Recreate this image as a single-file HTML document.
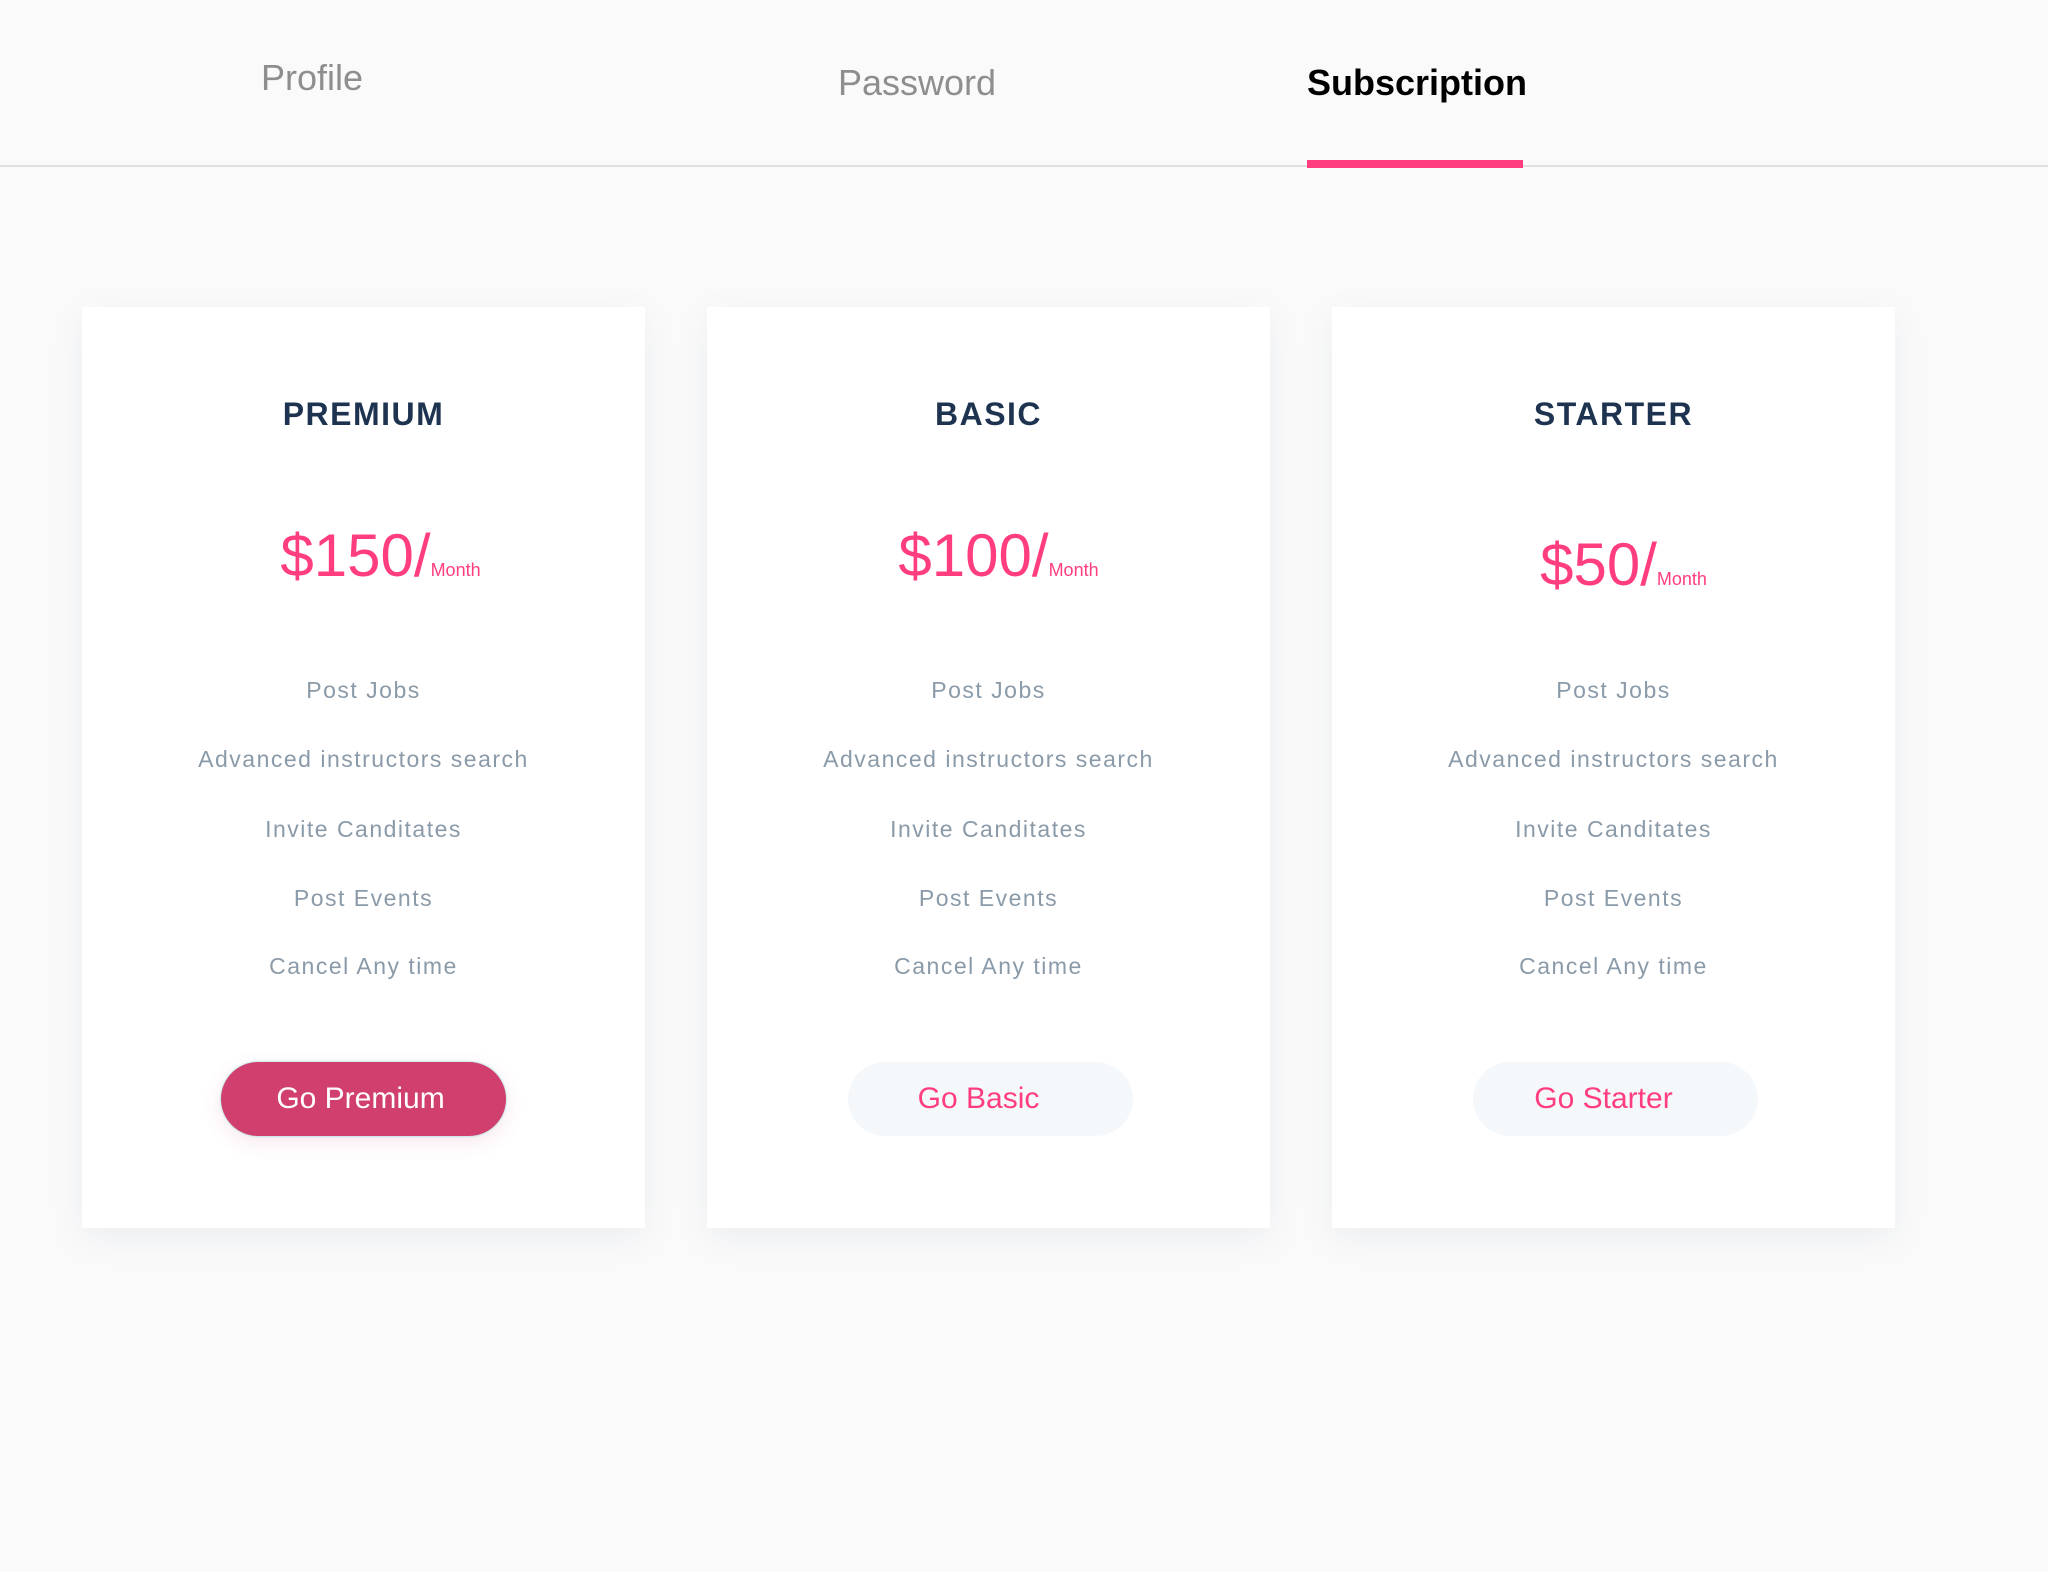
<!DOCTYPE html>
<html><head><meta charset="utf-8"><style>
*{margin:0;padding:0;box-sizing:border-box}
body{width:2048px;height:1572px;background:#fafafa;font-family:"Liberation Sans",sans-serif;position:relative;overflow:hidden}
.tab{position:absolute;font-size:36px;line-height:40px;color:#8e8e8e;white-space:nowrap}
.line{position:absolute;left:0;top:165px;width:2048px;height:2px;background:#e0e0e0}
.ul{position:absolute;left:1307px;top:160px;width:216px;height:8px;background:#ff3d7f}
.card{position:absolute;top:307px;width:563px;height:921px;background:#fff;box-shadow:0 10px 30px rgba(120,140,170,0.10)}
.t{position:absolute;left:0;width:100%;text-align:center;white-space:nowrap}
.title{font-size:32px;line-height:40px;font-weight:bold;color:#1e3350;letter-spacing:1.5px}
.price{font-size:60px;line-height:70px;color:#ff3d7f;left:17px}
.price small{font-size:18px}
.f{font-size:23px;line-height:30px;color:#8a9aa8;letter-spacing:1.5px}
.btn{position:absolute;left:139px;top:755px;width:285px;height:74px;border-radius:37px;font-size:30px;line-height:74px;text-align:center;color:#ff3d7f;background:#f5f8fb;padding-right:24px}
.btn.p{background:#d13f6e;color:#fff;padding-right:6px;box-shadow:0 0 2px #7fd0d0,0 6px 20px rgba(200,60,110,0.12)}
</style></head><body>
<div class="tab" style="left:261px;top:58px">Profile</div>
<div class="tab" style="left:838px;top:63px">Password</div>
<div class="tab" style="left:1307px;top:63px;color:#000;font-weight:bold">Subscription</div>
<div class="line"></div><div class="ul"></div>

<div class="card" style="left:82px">
<div class="t title" style="top:87px">PREMIUM</div>
<div class="t price" style="top:214px">$150/<small>Month</small></div>
<div class="t f" style="top:368px">Post Jobs</div>
<div class="t f" style="top:437px">Advanced instructors search</div>
<div class="t f" style="top:507px">Invite Canditates</div>
<div class="t f" style="top:576px">Post Events</div>
<div class="t f" style="top:644px">Cancel Any time</div>
<div class="btn p">Go Premium</div>
</div>

<div class="card" style="left:707px">
<div class="t title" style="top:87px">BASIC</div>
<div class="t price" style="top:214px;left:10px">$100/<small>Month</small></div>
<div class="t f" style="top:368px">Post Jobs</div>
<div class="t f" style="top:437px">Advanced instructors search</div>
<div class="t f" style="top:507px">Invite Canditates</div>
<div class="t f" style="top:576px">Post Events</div>
<div class="t f" style="top:644px">Cancel Any time</div>
<div class="btn" style="left:141px">Go Basic</div>
</div>

<div class="card" style="left:1332px">
<div class="t title" style="top:87px">STARTER</div>
<div class="t price" style="top:223px;left:10px">$50/<small>Month</small></div>
<div class="t f" style="top:368px">Post Jobs</div>
<div class="t f" style="top:437px">Advanced instructors search</div>
<div class="t f" style="top:507px">Invite Canditates</div>
<div class="t f" style="top:576px">Post Events</div>
<div class="t f" style="top:644px">Cancel Any time</div>
<div class="btn" style="left:141px">Go Starter</div>
</div>
</body></html>
